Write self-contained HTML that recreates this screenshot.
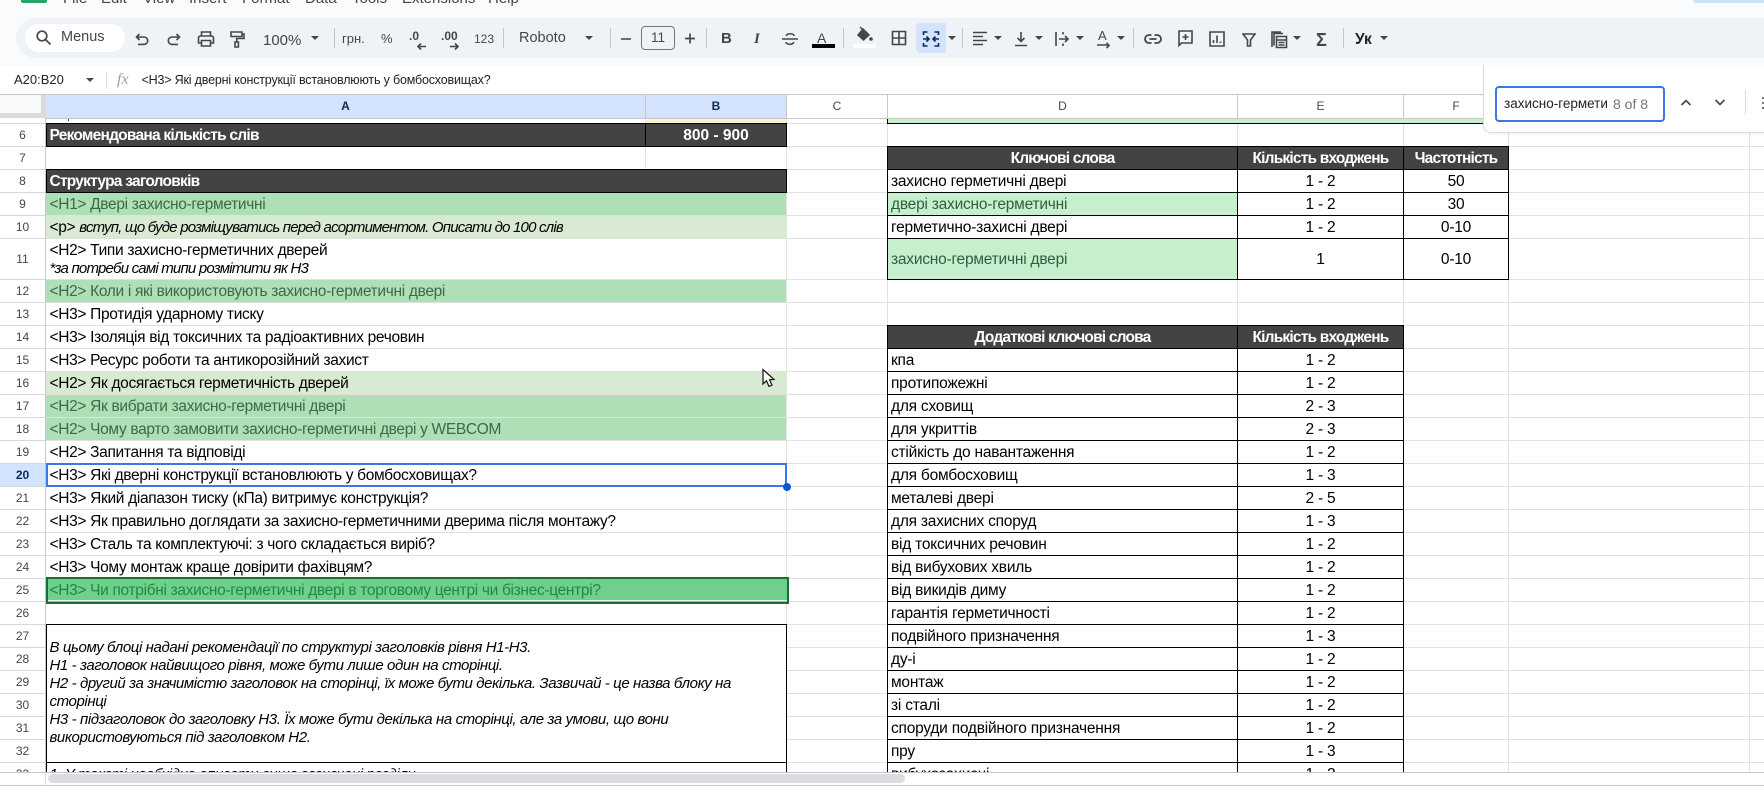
<!DOCTYPE html>
<html><head><meta charset="utf-8"><title>Sheet</title>
<style>
html,body{margin:0;padding:0;background:#fff}
#p{position:relative;width:1764px;height:786px;overflow:hidden;background:#fff;font-family:"Liberation Sans",Arial,sans-serif;color:#000}
#p div,#p span.a,#p svg.a{position:absolute}
.t{white-space:nowrap;color:#444746;font-size:14px;line-height:20px}
.s{width:1px;background:#c7c7c7;top:28px;height:20px}
.k{width:0;height:0;border-left:4.5px solid transparent;border-right:4.5px solid transparent;border-top:4.5px solid #444746;top:36px}
svg.a{fill:none;stroke:#444746;stroke-width:1.6}
.h{top:95px;height:23px;line-height:22px;text-align:center;font-size:12px;color:#444746;border-right:1px solid #c7c7c7;box-sizing:border-box;background:#fff}
.h.o{background:#d3e3fd;color:#0b2a5b;font-weight:bold}
.n{left:0;width:45px;text-align:center;font-size:12px;color:#444746;height:23px;line-height:24px}
.r{left:46px;width:740px;height:22px;line-height:23px;padding-left:3.5px;box-sizing:border-box;font-size:15.5px;letter-spacing:-.32px;white-space:nowrap;overflow:hidden;color:#000}
.r i{font-size:15px;letter-spacing:-.8px}
.r.b{color:#fff;font-weight:bold;letter-spacing:-.75px}
.g{background:#aedfb6;color:#3a6a47}
.l{background:#d9ead3}
.q{font-style:italic;font-size:15px;letter-spacing:-.4px}
table{position:absolute;left:887px;border-collapse:collapse;table-layout:fixed;font-size:15.5px;line-height:18px;letter-spacing:-.22px}
td{border:1px solid #000;padding:2px 3px 0;height:23px;white-space:nowrap;overflow:hidden;box-sizing:border-box;text-align:center}
td:first-child{text-align:left}
tr.d td{background:#434343;color:#fff;font-weight:bold;text-align:center;letter-spacing:-.8px}
td.m{background:#c6efce;color:#2f5f3f}
</style></head><body><div id="p">

<!-- top bar -->
<div style="left:0;top:0;width:1764px;height:66px;background:#f9fbfd"></div>
<div style="left:21px;top:0;width:26px;height:3px;background:#23a566;border-radius:0 0 2px 2px"></div>
<div style="left:1693px;top:0;width:71px;height:3px;background:#c2e7ff;border-radius:0 0 0 10px"></div>
<div class="t" style="left:63px;top:-11px;font-size:15px">File</div>
<div class="t" style="left:101px;top:-11px;font-size:15px">Edit</div>
<div class="t" style="left:143px;top:-11px;font-size:15px">View</div>
<div class="t" style="left:189px;top:-11px;font-size:15px">Insert</div>
<div class="t" style="left:242px;top:-11px;font-size:15px">Format</div>
<div class="t" style="left:305px;top:-11px;font-size:15px">Data</div>
<div class="t" style="left:352px;top:-11px;font-size:15px">Tools</div>
<div class="t" style="left:402px;top:-11px;font-size:15px">Extensions</div>
<div class="t" style="left:488px;top:-11px;font-size:15px">Help</div>

<!-- toolbar -->
<div style="left:16px;top:18px;width:1748px;height:40px;background:#eff3f8;border-radius:20px 0 0 20px"></div>
<div style="left:25px;top:24px;width:100px;height:28px;background:#fff;border-radius:14px"></div>
<svg class="a" style="left:35px;top:29px;stroke-width:1.7" width="17" height="17" viewBox="0 0 17 17"><circle cx="7" cy="7" r="4.8"/><path d="M10.5 10.5L15.5 15.5"/></svg>
<div class="t" style="left:61px;top:27px;font-size:14.5px">Menus</div>
<svg class="a" style="left:133px;top:31px" width="18" height="18" viewBox="0 0 18 18"><path d="M6.5 3L3.5 6L6.5 9M3.5 6H11a3.7 3.7 0 0 1 0 7.4H5"/></svg>
<svg class="a" style="left:165px;top:31px" width="18" height="18" viewBox="0 0 18 18"><path d="M11.5 3L14.5 6L11.5 9M14.5 6H7a3.7 3.7 0 0 0 0 7.4H13"/></svg>
<svg class="a" style="left:197px;top:30px" width="18" height="18" viewBox="0 0 18 18"><path d="M4.5 5.5V2h9v3.5M4.5 13H1.5V8a2 2 0 0 1 2-2h11a2 2 0 0 1 2 2v5h-3M4.5 10.5h9V16h-9z"/></svg>
<svg class="a" style="left:228px;top:30px" width="18" height="19" viewBox="0 0 18 19"><path d="M3 2h11v4.5H3zM14 4h2v4.5H8.7V12M7 12h3.4v5H7z"/></svg>
<div class="t" style="left:263px;top:31px;font-size:15px">100%</div>
<div class="k" style="left:311px"></div>
<div class="s" style="left:334px"></div>
<div class="t" style="left:342px;top:29px;font-size:13px">грн.</div>
<div class="t" style="left:381px;top:29px;font-size:13px">%</div>
<div class="t" style="left:409px;top:26px;font-size:12px;font-weight:bold">.0</div>
<svg class="a" style="left:416px;top:42px" width="11" height="9" viewBox="0 0 11 9"><path d="M10 4.500H2M5 1.500L2 4.500L5 7.500"/></svg>
<div class="t" style="left:441px;top:26px;font-size:12px;font-weight:bold">.00</div>
<svg class="a" style="left:449px;top:42px" width="11" height="9" viewBox="0 0 11 9"><path d="M1 4.500H9M6 1.500L9 4.500L6 7.500"/></svg>
<div class="t" style="left:474px;top:29px;font-size:12px">123</div>
<div class="s" style="left:503px"></div>
<div class="t" style="left:519px;top:28px;font-size:14.5px">Roboto</div>
<div class="k" style="left:585px"></div>
<div class="s" style="left:610px"></div>
<div style="left:621px;top:38px;width:10px;height:2px;background:#6b6e6c"></div>
<div class="t" style="left:641px;top:26px;width:32px;height:22px;border:1px solid #747775;border-radius:4px;text-align:center;line-height:22px;font-size:13.5px">11</div>
<svg class="a" style="left:684px;top:32px" width="12" height="13" viewBox="0 0 12 13"><path d="M1 6.500H11M6 1.500V11.500" stroke-width="1.7"/></svg>
<div class="s" style="left:706px"></div>
<div class="t" style="left:721px;top:29px;font-size:15px;font-weight:bold">B</div>
<div class="t" style="left:754px;top:29px;font-size:15px;font-weight:bold;font-style:italic;font-family:'Liberation Serif',serif">I</div>
<svg class="a" style="left:781px;top:31px" width="18" height="16" viewBox="0 0 18 16"><path d="M1 8H17M13 5C13 2 5 2 5.500 5M5 11C5 14 13 14 12.500 11"/></svg>
<div class="t" style="left:817px;top:28px;font-size:14px">A</div>
<div style="left:812px;top:44px;width:23px;height:4px;background:#000"></div>
<div class="s" style="left:843px"></div>
<svg class="a" style="left:855px;top:26px;fill:#444746;stroke-width:1.5" width="19" height="17" viewBox="0 0 19 17"><path d="M5 1L8 4M8 3L14 9L8.500 14L3 9z"/><circle cx="16" cy="13" r="1.800" stroke="none"/></svg>
<div style="left:853px;top:44px;width:23px;height:4px;background:#fff"></div>
<svg class="a" style="left:890px;top:29px" width="18" height="18" viewBox="0 0 18 18"><path d="M2.500 2.500h13v13h-13zM9 2.500v13M2.500 9h13"/></svg>
<div style="left:916px;top:23px;width:30px;height:30px;background:#d3e3fd;border-radius:4px 0 0 4px"></div>
<svg class="a" style="left:922px;top:30px;stroke:#0b2a5b" width="18" height="18" viewBox="0 0 18 18"><path d="M1.500 5V2h4M16.500 5V2h-4M1.500 13v3h4M16.500 13v3h-4M1 9h5.500M4.500 6.500L7 9L4.500 11.500M17 9h-5.500M13.500 6.500L11 9L13.500 11.500"/></svg>
<div class="k" style="left:948px"></div>
<div class="s" style="left:962px"></div>
<svg class="a" style="left:972px;top:30px" width="17" height="17" viewBox="0 0 17 17"><path d="M1 2.500H15M1 6.500H11M1 10.500H15M1 14.500H11"/></svg>
<div class="k" style="left:994px"></div>
<svg class="a" style="left:1012px;top:30px" width="18" height="18" viewBox="0 0 18 18"><path d="M9 2V11M5.500 8L9 11.500L12.500 8M3 15.500H15"/></svg>
<div class="k" style="left:1035px"></div>
<svg class="a" style="left:1054px;top:30px" width="17" height="18" viewBox="0 0 17 18"><path d="M2 2V16M9 2V4.500M9 13.500V16M5 9H14M11 6L14 9L11 12"/></svg>
<div class="k" style="left:1076px"></div>
<div class="t" style="left:1098px;top:26px;font-size:13px">A</div>
<svg class="a" style="left:1096px;top:42px" width="15" height="9" viewBox="0 0 15 9"><path d="M1 3H13M10.500 1L13 3.500L10.500 6"/></svg>
<div class="k" style="left:1117px"></div>
<div class="s" style="left:1133px"></div>
<svg class="a" style="left:1144px;top:31px;stroke-width:1.8" width="18" height="16" viewBox="0 0 18 16"><path d="M7.500 4H5a4 4 0 0 0 0 8h2.500M10.500 4H13a4 4 0 0 1 0 8h-2.500M5.500 8H12.500"/></svg>
<svg class="a" style="left:1177px;top:29px" width="17" height="19" viewBox="0 0 17 19"><path d="M2 2H15V14H4.500L2 16.500zM8.500 5V11M5.500 8H11.500"/></svg>
<svg class="a" style="left:1209px;top:31px" width="16" height="16" viewBox="0 0 16 16"><path d="M1 1H15V15H1zM4.500 12V9M8 12V4.500M11.500 12V10.500"/></svg>
<svg class="a" style="left:1242px;top:32px" width="14" height="15" viewBox="0 0 14 15"><path d="M1 2H13L8.500 8V14H5.500V8z"/></svg>
<svg class="a" style="left:1271px;top:30px" width="17" height="19" viewBox="0 0 17 19"><path d="M3 15.500V3.500H12M1 17V2H10"/><path d="M5.500 6.500H15.500V17.500H5.500zM5.500 10H15.500M7.500 12.500H13.500M7.500 15H13.500"/></svg>
<div class="k" style="left:1293px"></div>
<div class="t" style="left:1316px;top:30px;font-size:18px;font-weight:bold">Σ</div>
<div class="s" style="left:1343px"></div>
<div class="t" style="left:1355px;top:30px;font-size:15.5px;font-weight:bold;color:#222">Ук</div>
<div class="k" style="left:1380px"></div>

<!-- formula bar -->
<div class="t" style="left:14px;top:70px;font-size:13px;color:#222">A20:B20</div>
<div class="k" style="left:86px;top:78px"></div>
<div style="left:106px;top:72px;width:1px;height:17px;background:#dadce0"></div>
<div class="t" style="left:117px;top:70px;font-size:16px;font-style:italic;font-family:'Liberation Serif',serif;color:#9aa0a6">fx</div>
<div class="t" style="left:141.500px;top:70px;font-size:12.500px;letter-spacing:-.18px;color:#222">&lt;Н3&gt; Які дверні конструкції встановлюють у бомбосховищах?</div>

<!-- grid -->
<div id="sheet" style="left:0;top:94px;width:1764px;height:678px;overflow:hidden">
<div style="left:0;top:24px;width:1764px;height:654px;background:#fff"></div>
<div style="left:46px;top:29px;width:1718px;height:116px;background:repeating-linear-gradient(#e1e1e1 0 1px,transparent 1px 23px)"></div>
<div style="left:46px;top:185px;width:1718px;height:493px;background:repeating-linear-gradient(#e1e1e1 0 1px,transparent 1px 23px)"></div>
<div style="left:0;top:29px;width:46px;height:116px;background:repeating-linear-gradient(#d8d8d8 0 1px,transparent 1px 23px)"></div>
<div style="left:0;top:185px;width:46px;height:493px;background:repeating-linear-gradient(#d8d8d8 0 1px,transparent 1px 23px)"></div>
<div style="left:45px;top:24px;width:1px;height:654px;background:#c7c7c7"></div>
<div style="left:645px;top:24px;width:1px;height:51px;background:#e1e1e1"></div>
<div style="left:786px;top:24px;width:1px;height:654px;background:#e1e1e1"></div>
<div style="left:887px;top:24px;width:1px;height:654px;background:#e1e1e1"></div>
<div style="left:1237px;top:24px;width:1px;height:654px;background:#e1e1e1"></div>
<div style="left:1403px;top:24px;width:1px;height:654px;background:#e1e1e1"></div>
<div style="left:1508px;top:24px;width:1px;height:654px;background:#e1e1e1"></div>
<div style="left:1749px;top:24px;width:1px;height:654px;background:#e1e1e1"></div>
</div>

<!-- headers -->
<div style="left:0;top:94px;width:1764px;height:1px;background:#c7c7c7"></div>
<div style="left:0;top:95px;width:46px;height:23px;background:#f8f9fa"></div>
<div style="left:41px;top:95px;width:5px;height:23px;background:#dadada"></div>
<div style="left:0;top:113px;width:46px;height:5px;background:#dadada"></div>
<div class="h o" style="left:46px;width:600px">A</div>
<div class="h o" style="left:646px;width:141px">B</div>
<div class="h" style="left:787px;width:101px">C</div>
<div class="h" style="left:888px;width:350px">D</div>
<div class="h" style="left:1238px;width:166px">E</div>
<div class="h" style="left:1404px;width:105px">F</div>
<div class="h" style="left:1509px;width:241px"></div>
<div style="left:46px;top:118px;width:1718px;height:1px;background:#c7c7c7"></div>

<!-- row numbers -->
<div id="nums" style="left:0;top:0;width:46px;height:772px;overflow:hidden">
<div class="n" style="top:123px">6</div><div class="n" style="top:146px">7</div><div class="n" style="top:169px">8</div><div class="n" style="top:192px">9</div><div class="n" style="top:215px">10</div>
<div class="n" style="top:247px">11</div><div class="n" style="top:279px">12</div><div class="n" style="top:302px">13</div><div class="n" style="top:325px">14</div><div class="n" style="top:348px">15</div>
<div class="n" style="top:371px">16</div><div class="n" style="top:394px">17</div><div class="n" style="top:417px">18</div><div class="n" style="top:440px">19</div>
<div style="left:0;top:464px;width:45px;height:22px;background:#d3e3fd"></div>
<div class="n" style="top:463px;font-weight:bold;color:#0b2a5b">20</div>
<div class="n" style="top:486px">21</div><div class="n" style="top:509px">22</div><div class="n" style="top:532px">23</div><div class="n" style="top:555px">24</div><div class="n" style="top:578px">25</div>
<div class="n" style="top:601px">26</div><div class="n" style="top:624px">27</div><div class="n" style="top:647px">28</div><div class="n" style="top:670px">29</div><div class="n" style="top:693px">30</div><div class="n" style="top:716px">31</div><div class="n" style="top:739px">32</div><div class="n" style="top:762px">33</div>
</div>

<!-- row 5 remains -->
<div style="left:646px;top:119px;width:140px;height:4px;background:#fff2cc"></div>
<div style="left:888px;top:119px;width:621px;height:4px;background:#c6efce"></div>
<div style="left:887px;top:119px;width:1px;height:5px;background:#000"></div>
<div style="left:887px;top:123px;width:622px;height:1px;background:#000"></div>
<div style="left:68px;top:119px;width:1px;height:2px;background:#444"></div>

<!-- column A -->
<div style="left:46px;top:123px;width:741px;height:24px;background:#434343;border:1px solid #000;box-sizing:border-box"></div>
<div style="left:645px;top:123px;width:1px;height:24px;background:#000"></div>
<div class="r b" style="top:124px;width:590px">Рекомендована кількість слів</div>
<div class="r b" style="top:124px;left:646px;width:140px;padding:0;text-align:center;letter-spacing:0">800 - 900</div>
<div style="left:46px;top:169px;width:741px;height:24px;background:#434343;border:1px solid #000;box-sizing:border-box"></div>
<div class="r b" style="top:170px">Структура заголовків</div>
<div class="r g" style="top:193px">&lt;Н1&gt; Двері захисно-герметичні</div>
<div class="r l" style="top:216px">&lt;p&gt; <i>вступ, що буде розміщуватись перед асортиментом. Описати до 100 слів</i></div>
<div class="r" style="top:242px;height:36px;line-height:18px">&lt;Н2&gt; Типи захисно-герметичних дверей<br><i>*за потреби самі типи розмітити як Н3</i></div>
<div class="r g" style="top:280px">&lt;Н2&gt; Коли і які використовують захисно-герметичні двері</div>
<div class="r" style="top:303px">&lt;Н3&gt; Протидія ударному тиску</div>
<div class="r" style="top:326px">&lt;Н3&gt; Ізоляція від токсичних та радіоактивних речовин</div>
<div class="r" style="top:349px">&lt;Н3&gt; Ресурс роботи та антикорозійний захист</div>
<div class="r l" style="top:372px">&lt;Н2&gt; Як досягається герметичність дверей</div>
<div class="r g" style="top:395px">&lt;Н2&gt; Як вибрати захисно-герметичні двері</div>
<div class="r g" style="top:418px">&lt;Н2&gt; Чому варто замовити захисно-герметичні двері у WEBCOM</div>
<div class="r" style="top:441px">&lt;Н2&gt; Запитання та відповіді</div>
<div class="r" style="top:464px">&lt;Н3&gt; Які дверні конструкції встановлюють у бомбосховищах?</div>
<div class="r" style="top:487px">&lt;Н3&gt; Який діапазон тиску (кПа) витримує конструкція?</div>
<div class="r" style="top:510px">&lt;Н3&gt; Як правильно доглядати за захисно-герметичними дверима після монтажу?</div>
<div class="r" style="top:533px">&lt;Н3&gt; Сталь та комплектуючі: з чого складається виріб?</div>
<div class="r" style="top:556px">&lt;Н3&gt; Чому монтаж краще довірити фахівцям?</div>
<div style="left:46px;top:463px;width:741px;height:24px;border:2px solid #3b78e7;box-sizing:border-box"></div>
<div style="left:783px;top:483px;width:8px;height:8px;border-radius:50%;background:#0b57d0"></div>
<div style="left:46px;top:577px;width:743px;height:27px;background:#6fcf8b;border:2px solid #1e6b33;box-sizing:border-box"></div>
<div style="left:48px;top:600px;width:739px;height:1px;background:#e8f5ec"></div>
<div class="r" style="top:579px;color:#1f8a3f">&lt;Н3&gt; Чи потрібні захисно-герметичні двері в торговому центрі чи бізнес-центрі?</div>

<div style="left:46px;top:624px;width:741px;height:139px;background:#fff;border:1px solid #000;box-sizing:border-box"></div>
<div class="r q" style="top:639px;height:112px;line-height:18px">В цьому блоці надані рекомендації по структурі заголовків рівня Н1-Н3.<br>Н1 - заголовок найвищого рівня, може бути лише один на сторінці.<br>Н2 - другий за значимістю заголовок на сторінці, їх може бути декілька. Зазвичай - це назва блоку на<br>сторінці<br>Н3 - підзаголовок до заголовку Н3. Їх може бути декілька на сторінці, але за умови, що вони<br>використовуються під заголовком Н2.</div>
<div style="left:46px;top:763px;width:1px;height:9px;background:#000"></div>
<div style="left:786px;top:763px;width:1px;height:9px;background:#000"></div>
<div class="r q" style="top:763px;height:9px;line-height:23px">1. У тексті необхідно описати вище зазначені розділи</div>

<!-- right tables -->
<table style="top:146px;width:621px">
<colgroup><col style="width:350px"><col style="width:166px"><col style="width:105px"></colgroup>
<tr class="d"><td>Ключові слова</td><td>Кількість входжень</td><td>Частотність</td></tr>
<tr><td>захисно герметичні двері</td><td>1 - 2</td><td>50</td></tr>
<tr><td class="m">двері захисно-герметичні</td><td>1 - 2</td><td>30</td></tr>
<tr><td>герметично-захисні двері</td><td>1 - 2</td><td>0-10</td></tr>
<tr style="height:41px"><td class="m" style="height:41px">захисно-герметичні двері</td><td style="height:41px">1</td><td style="height:41px">0-10</td></tr>
</table>
<div style="left:887px;top:325px;width:520px;height:447px;overflow:hidden">
<table style="left:0;top:0;width:516px">
<colgroup><col style="width:350px"><col style="width:166px"></colgroup>
<tr class="d"><td>Додаткові ключові слова</td><td>Кількість входжень</td></tr>
<tr><td>кпа</td><td>1 - 2</td></tr>
<tr><td>протипожежні</td><td>1 - 2</td></tr>
<tr><td>для сховищ</td><td>2 - 3</td></tr>
<tr><td>для укриттів</td><td>2 - 3</td></tr>
<tr><td>стійкість до навантаження</td><td>1 - 2</td></tr>
<tr><td>для бомбосховищ</td><td>1 - 3</td></tr>
<tr><td>металеві двері</td><td>2 - 5</td></tr>
<tr><td>для захисних споруд</td><td>1 - 3</td></tr>
<tr><td>від токсичних речовин</td><td>1 - 2</td></tr>
<tr><td>від вибухових хвиль</td><td>1 - 2</td></tr>
<tr><td>від викидів диму</td><td>1 - 2</td></tr>
<tr><td>гарантія герметичності</td><td>1 - 2</td></tr>
<tr><td>подвійного призначення</td><td>1 - 3</td></tr>
<tr><td>ду-і</td><td>1 - 2</td></tr>
<tr><td>монтаж</td><td>1 - 2</td></tr>
<tr><td>зі сталі</td><td>1 - 2</td></tr>
<tr><td>споруди подвійного призначення</td><td>1 - 2</td></tr>
<tr><td>пру</td><td>1 - 3</td></tr>
<tr><td>вибухозахисні</td><td>1 - 2</td></tr>
</table>
</div>

<!-- cursor -->
<svg class="a" style="left:760px;top:367px;fill:#fff;stroke:#111;stroke-width:1.200" width="18" height="23" viewBox="0 0 18 23"><path d="M3 2.500V17L6.500 13.800L9 19.500L12 18.200L9.500 12.800L14 12.500z"/></svg>

<!-- scrollbar -->
<div style="left:0;top:772px;width:1764px;height:14px;background:#fff"></div>
<div style="left:0;top:772px;width:1764px;height:1px;background:#c7c7c7"></div>
<div style="left:0;top:785px;width:1764px;height:1px;background:#c7c7c7"></div>
<div style="left:45px;top:772px;width:1px;height:13px;background:#dadada"></div>
<div style="left:48px;top:774px;width:857px;height:9px;background:#dadce0;border-radius:5px"></div>

<!-- find panel -->
<div style="left:1483px;top:65px;width:290px;height:68px;background:#fff;border:1px solid #dadce0;border-top:0;border-radius:0 0 0 8px;box-sizing:border-box;box-shadow:0 1px 2px rgba(60,64,67,.08)"></div>
<div style="left:1495px;top:86px;width:170px;height:36px;border:2px solid #3b78e7;border-radius:4px;box-sizing:border-box;background:#fff"></div>
<div class="t" style="left:1504px;top:94px;width:103px;overflow:hidden;font-size:13.500px;color:#222">захисно-герметичні</div>
<div class="t" style="left:1613px;top:94px;font-size:14px;color:#70757a">8 of 8</div>
<svg class="a" style="left:1679px;top:98px" width="14" height="9" viewBox="0 0 14 9"><path d="M2.500 7L7 2.500L11.500 7"/></svg>
<svg class="a" style="left:1713px;top:98px" width="14" height="9" viewBox="0 0 14 9"><path d="M2.500 2L7 6.500L11.500 2"/></svg>
<div style="left:1745px;top:90px;width:1px;height:24px;background:#dadce0"></div>
<div style="left:1762px;top:97px;width:2px;height:2px;background:#777"></div>
<div style="left:1762px;top:102px;width:2px;height:2px;background:#777"></div>
<div style="left:1762px;top:107px;width:2px;height:2px;background:#777"></div>
</div></body></html>
